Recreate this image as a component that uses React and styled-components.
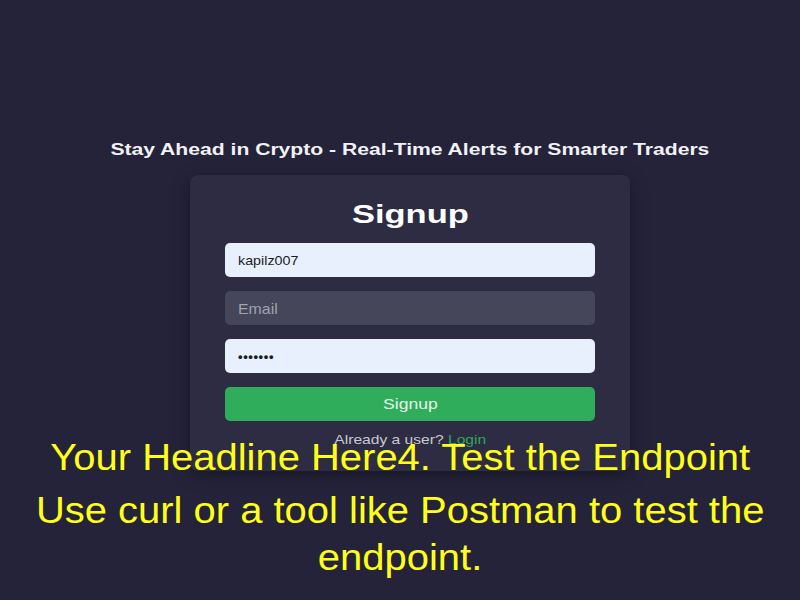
import React from 'react'
import styled, { createGlobalStyle } from 'styled-components'

const GlobalStyle = createGlobalStyle`
    html, body {
        margin: 0;
        padding: 0;
        background: #24233a;
        font-family: "Liberation Sans", Arial, sans-serif;
    }
`

const Page = styled.div`
    position: relative;
    width: 800px;
    height: 600px;
    overflow: hidden;
    background: #24233a;
    display: flex;
    flex-direction: column;
    align-items: center;
    padding: 140px 0 0 20px;
    box-sizing: border-box;
`

// the text in the shot is drawn a little wider than Arial, so stretch it
const Wide = styled.span`
    display: inline-block;
    white-space: nowrap;
    transform: scaleX(${({ scale }) => scale || 1});
    transform-origin: ${({ origin }) => origin || 'center'};
`

const Tagline = styled.h2`
    margin: 0 0 15px;
    color: #f2f2f5;
    font-size: 16px;
    font-weight: 700;
    line-height: 20px;
`

const Card = styled.div`
    width: 440px;
    box-sizing: border-box;
    padding: 24px 35px 24px;
    background: #2d2c42;
    border-radius: 8px;
    box-shadow: 0 4px 18px rgba(0, 0, 0, 0.35);
    display: flex;
    flex-direction: column;
`

const Heading = styled.h1`
    margin: 0 0 14px;
    text-align: center;
    color: #ffffff;
    font-size: 25px;
    line-height: 30px;
    font-weight: 700;
`

const Form = styled.div`
    display: flex;
    flex-direction: column;
    gap: 14px;
`

const Input = styled.div`
    height: 34px;
    border-radius: 5px;
    padding: 0 13px;
    display: flex;
    align-items: center;
    box-sizing: border-box;
    background: ${({ filled }) => (filled ? '#e8f0fe' : '#454659')};
    color: ${({ filled }) => (filled ? '#1c1c1c' : '#a2a3ae')};
    font-size: ${({ filled }) => (filled ? '13px' : '15px')};
    letter-spacing: ${({ dots }) => (dots ? '0.6px' : '0')};
    font-weight: ${({ dots }) => (dots ? '700' : '400')};
`

const Button = styled.div`
    height: 34px;
    border-radius: 5px;
    background: #30ad5a;
    color: #e6f5ea;
    font-size: 15px;
    padding-bottom: 2px;
    box-sizing: border-box;
    display: flex;
    align-items: center;
    justify-content: center;
`

const Footer = styled.p`
    margin: 11px 0 0;
    text-align: center;
    font-size: 13px;
    color: #c9c9d2;
`

const LoginLink = styled.a`
    color: #2fa65a;
    text-decoration: none;
`

const Caption = styled.div`
    position: absolute;
    left: 0;
    right: 0;
    top: 432px;
    text-align: center;
    color: #ffff1a;
    font-size: 36px;
    display: flex;
    flex-direction: column;
    align-items: center;
`

const CaptionLine = styled.div`
    line-height: ${({ lh }) => lh || '52px'};
    margin-bottom: ${({ gap }) => gap || '0'};
    transform: scaleX(1.11);
    white-space: nowrap;
`

const App = () => {
    return (
        <>
            <GlobalStyle />
            <Page>
                <Tagline>
                    <Wide scale={1.32}>Stay Ahead in Crypto - Real-Time Alerts for Smarter Traders</Wide>
                </Tagline>
                <Card>
                    <Heading>
                        <Wide scale={1.38}>Signup</Wide>
                    </Heading>
                    <Form>
                        <Input filled>
                            <Wide scale={1.1} origin="left">kapilz007</Wide>
                        </Input>
                        <Input>
                            <Wide scale={1.06} origin="left">Email</Wide>
                        </Input>
                        <Input filled dots>•••••••</Input>
                        <Button>
                            <Wide scale={1.17}>Signup</Wide>
                        </Button>
                    </Form>
                    <Footer>
                        <Wide scale={1.2}>
                            Already a user? <LoginLink href="#">Login</LoginLink>
                        </Wide>
                    </Footer>
                </Card>
                <Caption>
                    <CaptionLine gap="4px">Your Headline Here4. Test the Endpoint</CaptionLine>
                    <CaptionLine lh="46px">Use curl or a tool like Postman to test the</CaptionLine>
                    <CaptionLine lh="48px">endpoint.</CaptionLine>
                </Caption>
            </Page>
        </>
    )
}

export default App
